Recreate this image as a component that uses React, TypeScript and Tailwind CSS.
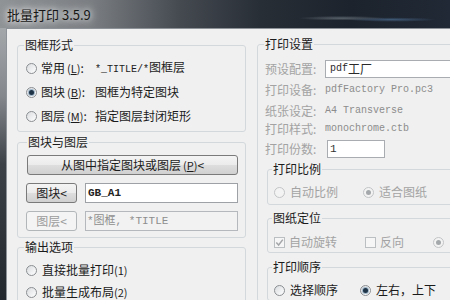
import type { ReactNode } from "react";

const mono = "font-['Liberation_Mono','Noto_Sans_CJK_SC',monospace]";

function Radio({ checked, disabled }: { checked?: boolean; disabled?: boolean }) {
  return (
    <span
      className={`flex h-[11px] w-[11px] shrink-0 items-center justify-center rounded-full border ${
        disabled
          ? "border-[#c2c4c6] bg-[#f3f3f3]"
          : "border-[#8b8e91] bg-linear-to-br from-[#d9dcdf] to-white"
      }`}
    >
      {checked && (
        <span
          className={`h-[5px] w-[5px] rounded-full ${
            disabled ? "bg-[#a5a8aa]" : "bg-[#1f3446] shadow-[0_0_0_1px_#9fb6c9]"
          }`}
        />
      )}
    </span>
  );
}

function Check({ checked }: { checked?: boolean }) {
  return (
    <span className="flex h-[11px] w-[11px] shrink-0 items-center justify-center border border-[#bcbfc2] bg-[#f6f6f6]">
      {checked && (
        <svg viewBox="0 0 9 9" className="h-[9px] w-[9px]">
          <path d="M1.3 4.6 L3.6 7 L7.8 1.6" stroke="#a4a6a8" strokeWidth="1.5" fill="none" />
        </svg>
      )}
    </span>
  );
}

function Group({
  title,
  className = "",
  children,
}: {
  title: string;
  className?: string;
  children: ReactNode;
}) {
  return (
    <fieldset className={`rounded-[3px] border border-[#d3d8dc] ${className}`}>
      <legend className="px-[1px] text-[12px] leading-[16px] text-[#1b1b1b]">{title}</legend>
      {children}
    </fieldset>
  );
}

const btn =
  "flex items-center justify-center rounded-[3px] border border-[#7a7a7a] bg-[linear-gradient(#f4f4f4,#ebebeb_50%,#dedede_50%,#d0d0d0)] text-[12px] text-[#1b1b1b]";

function RadioRow({
  checked,
  label,
  keyChar,
  children,
}: {
  checked?: boolean;
  label: string;
  keyChar: string;
  children: ReactNode;
}) {
  return (
    <div className="flex h-[24px] items-center pl-[2px]">
      <Radio checked={checked} />
      <span className="ml-[4px] w-[54px] whitespace-nowrap">
        {label}
        <span className="ml-[2px] text-[11px]">
          (<span className="underline">{keyChar}</span>)
        </span>
        :
      </span>
      <span className="whitespace-nowrap">{children}</span>
    </div>
  );
}

function InfoRow({ label, h, children }: { label: string; h: string; children: ReactNode }) {
  return (
    <div className={`flex items-center pl-[1px] ${h}`}>
      <span className="w-[60px] shrink-0 whitespace-nowrap text-[#a3a3a3]">{label}</span>
      {children}
    </div>
  );
}

export default function App() {
  return (
    <div className="flex h-[300px] w-[450px] flex-col overflow-hidden font-['Noto_Sans_CJK_SC','Microsoft_YaHei',sans-serif] text-[12px] leading-none text-[#1b1b1b]">
      {/* aero title bar */}
      <div className="flex h-[28px] shrink-0 items-center bg-[radial-gradient(ellipse_at_76%_65%,rgba(160,170,180,0.45),transparent_9%),radial-gradient(ellipse_at_87%_70%,rgba(90,130,175,0.55),transparent_8%),linear-gradient(90deg,#909396_0%,#7b7f83_20%,#454a51_40%,#282e36_58%,#1c232c_78%,#212936_100%)] pl-[7px]">
        <span className="text-[13px] text-[#161616] [text-shadow:0_0_6px_#fff,0_0_10px_#e8e8e8]">
          批量打印 3.5.9
        </span>
      </div>

      <div className="flex min-h-0 flex-1">
        <div className="w-[6px] shrink-0 bg-[linear-gradient(#a4a7aa,#84888d_25%,#3c4147_50%,#22272d)]" />
        <div className="flex flex-1 items-start border-l border-t border-[#8d9298] bg-[#f0f0f0] pl-[10px] pt-[8px]">
          {/* left column */}
          <div className="flex w-[229px] shrink-0 flex-col">
            <Group title="图框形式" className="pb-[3px] pl-[6px] pr-[6px]">
              <div className="pt-[3px]">
                <RadioRow label="常用" keyChar="L">
                  <span className={`${mono} text-[10px]`}>*_TITLE/*</span>图框层
                </RadioRow>
                <RadioRow checked label="图块" keyChar="B">
                  图框为特定图块
                </RadioRow>
                <RadioRow label="图层" keyChar="M">
                  指定图层封闭矩形
                </RadioRow>
              </div>
            </Group>

            <Group title="图块与图层" className="mt-[2px] pb-[6px] pl-[9px] pr-[7px]">
              <div className={`${btn} mt-[5px] h-[20px]`}>
                从图中指定图块或图层
                <span className="ml-[2px] text-[11px]">
                  (<span className="underline">P</span>)
                </span>
                &lt;
              </div>
              <div className="mt-[8px] flex h-[20px] gap-[8px] pl-[-1px]">
                <div className={`${btn} -ml-[1px] w-[51px]`}>图块&lt;</div>
                <div className={`flex flex-1 items-center border border-[#9ea1a6] bg-white pl-[2px] ${mono} text-[11px] font-bold text-[#222]`}>
                  GB_A1
                </div>
              </div>
              <div className="mt-[8px] flex h-[20px] gap-[8px]">
                <div className="-ml-[1px] flex w-[51px] items-center justify-center rounded-[3px] border border-[#b2b6b9] bg-[#f4f4f4] text-[#9c9c9c]">
                  图层&lt;
                </div>
                <div className={`flex flex-1 items-center border border-[#b5b8bc] bg-[#f2f2f2] pl-[1px] ${mono} text-[11px] text-[#8e8e8e]`}>
                  *图框, *TITLE
                </div>
              </div>
            </Group>

            <Group title="输出选项" className="mt-[1px] pl-[6px] pr-[6px]">
              <div className="pt-[4px]">
                <div className="flex h-[22px] items-center pl-[2px]">
                  <Radio />
                  <span className="ml-[5px]">
                    直接批量打印<span className="text-[11px]">(1)</span>
                  </span>
                </div>
                <div className="flex h-[22px] items-center pl-[2px]">
                  <Radio />
                  <span className="ml-[5px]">
                    批量生成布局<span className="text-[11px]">(2)</span>
                  </span>
                </div>
              </div>
            </Group>
          </div>

          {/* right column */}
          <Group title="打印设置" className="-mt-[1px] ml-[11px] w-[240px] shrink-0 pl-[6px]">
            <div className="pt-[7px]">
              <InfoRow label="预设配置:" h="h-[20px]">
                <div className="flex h-[18px] flex-1 items-center border border-[#a9acb1] bg-white pl-[4px] text-[#2a2a2a]">
                  <span className={`${mono} text-[10px]`}>pdf</span>工厂
                </div>
              </InfoRow>
              <InfoRow label="打印设备:" h="h-[22px]">
                <span className={`${mono} whitespace-nowrap text-[10px] text-[#8c8c8c]`}>pdfFactory Pro.pc3</span>
              </InfoRow>
              <InfoRow label="纸张设定:" h="h-[19px]">
                <span className={`${mono} whitespace-nowrap text-[10px] text-[#8c8c8c]`}>A4 Transverse</span>
              </InfoRow>
              <InfoRow label="打印样式:" h="h-[18px]">
                <span className={`${mono} whitespace-nowrap text-[10px] text-[#8c8c8c]`}>monochrome.ctb</span>
              </InfoRow>
              <InfoRow label="打印份数:" h="h-[22px]">
                <div className={`ml-[2px] flex h-[18px] w-[58px] items-center border border-[#a9acb1] bg-white pl-[2px] ${mono} text-[11px] text-[#333]`}>
                  1
                </div>
              </InfoRow>

              <Group title="打印比例" className="ml-[3px] mt-[1px] w-[220px] pb-[2px] pl-[4px]">
                <div className="flex h-[20px] items-center pl-[2px] pt-[0px] text-[#a3a3a3] mt-[5px]">
                  <div className="flex w-[89px] items-center">
                    <Radio disabled />
                    <span className="ml-[5px]">自动比例</span>
                  </div>
                  <div className="flex items-center">
                    <Radio disabled checked />
                    <span className="ml-[5px]">适合图纸</span>
                  </div>
                </div>
              </Group>

              <Group title="图纸定位" className="ml-[3px] mt-[5px] w-[220px] pl-[4px]">
                <div className="mt-[6px] flex h-[20px] items-center pl-[2px] text-[#a3a3a3]">
                  <div className="flex w-[91px] items-center">
                    <Check checked />
                    <span className="ml-[4px]">自动旋转</span>
                  </div>
                  <div className="flex w-[68px] items-center">
                    <Check />
                    <span className="ml-[4px]">反向</span>
                  </div>
                  <div className="flex items-center">
                    <Radio disabled checked />
                    <span className="ml-[5px]">自动</span>
                  </div>
                </div>
              </Group>

              <Group title="打印顺序" className="ml-[3px] mt-[6px] w-[220px] pl-[4px]">
                <div className="mt-[5px] flex h-[20px] items-center pl-[2px]">
                  <div className="flex w-[86px] items-center">
                    <Radio />
                    <span className="ml-[5px]">选择顺序</span>
                  </div>
                  <div className="flex items-center">
                    <Radio checked />
                    <span className="ml-[5px]">左右，上下</span>
                  </div>
                </div>
              </Group>
            </div>
          </Group>
        </div>
      </div>
    </div>
  );
}
